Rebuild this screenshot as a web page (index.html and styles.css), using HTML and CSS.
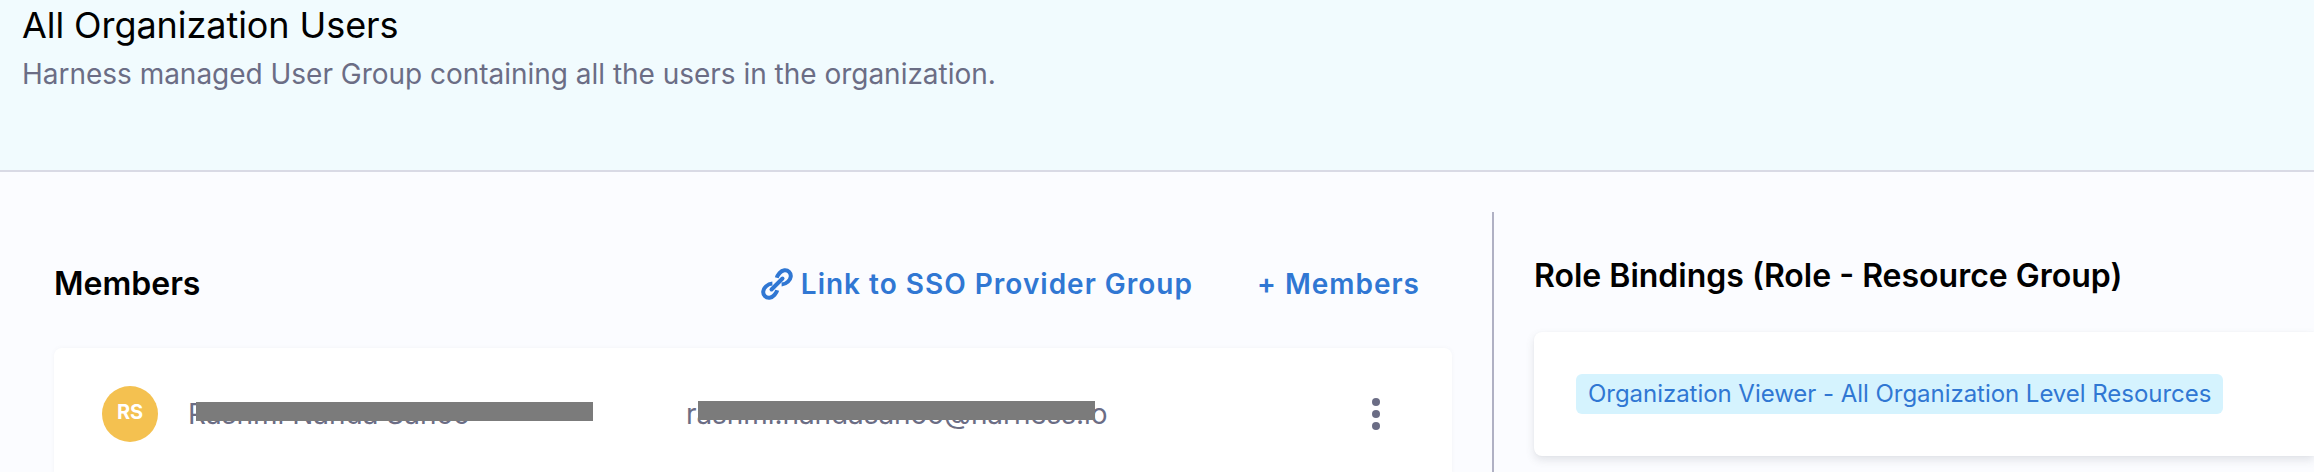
FILE: index.html
```html
<!DOCTYPE html>
<html lang="en">
<head>
<meta charset="utf-8">
<title>All Organization Users</title>
<link rel="stylesheet" href="styles.css">
</head>
<body>
<header class="header">
  <h1 class="title">All Organization Users</h1>
  <p class="subtitle">Harness managed User Group containing all the users in the organization.</p>
</header>
<main class="content">
  <section class="members">
    <div class="toolbar">
      <h2 class="heading">Members</h2>
      <a class="link sso">
        <svg class="link-icon" viewBox="0 0 32 32" fill="none" stroke="currentColor">
          <path stroke-width="4" d="M15.8 9.8 C16.2 8.2 17.2 6.6 18.5 5.1 C21.4 1.8 25.5 1.2 28.1 3.9 C30.8 6.6 30.1 10.6 27 13.6 C25.2 15.3 23.5 16.3 20.6 16.4"/>
          <path stroke-width="4" d="M16.2 22.2 C15.8 23.8 14.8 25.4 13.5 26.9 C10.6 30.2 6.5 30.8 3.9 28.1 C1.2 25.4 1.9 21.4 5 18.4 C6.8 16.7 8.5 15.7 11.4 15.6"/>
          <path stroke-width="4" stroke-linecap="round" d="M10.5 21.5 L21.5 10.5"/>
        </svg>
        <span class="sso-text">Link to SSO Provider Group</span>
      </a>
      <a class="link add">+ Members</a>
    </div>
    <div class="member-card">
      <span class="avatar">RS</span>
      <span class="cell name">Rashmi Nanda Sahoo<span class="mask"></span></span>
      <span class="cell email">rashmi.nandasahoo@harness.io<span class="mask"></span></span>
      <svg class="menu" viewBox="0 0 8 32"><circle cx="4" cy="4" r="4"/><circle cx="4" cy="16" r="4"/><circle cx="4" cy="28" r="4"/></svg>
    </div>
  </section>
  <section class="roles">
    <h2 class="heading role-heading">Role Bindings (Role - Resource Group)</h2>
    <div class="role-card"><span class="tag">Organization Viewer - All Organization Level Resources</span></div>
  </section>
</main>
</body>
</html>
```

FILE: styles.css
```css
* { box-sizing: border-box; }
body {
  margin: 0;
  height: 472px;
  overflow: hidden;
  font-family: Inter, "Liberation Sans", sans-serif;
  background: #fbfcff;
  color: #000;
  white-space: nowrap;
}
h1, h2, p { margin: 0; }
.header {
  height: 172px;
  padding: 3px 22px 0;
  background: #f1fbfe;
  border-bottom: 2px solid #d9dae5;
}
.title { font-size: 36px; line-height: 44px; font-weight: 400; letter-spacing: -0.07px; }
.subtitle { margin-top: 10px; font-size: 28px; line-height: 34px; letter-spacing: -0.02px; color: #6b6d85; }
.content { display: flex; height: 300px; padding-top: 40px; }
.members { width: 1494px; padding: 44px 40px 0 54px; border-right: 2px solid #b0b1c4; }
.toolbar { display: flex; align-items: center; height: 56px; }
.heading { font-size: 32px; line-height: 40px; font-weight: 600; }
.link {
  display: flex;
  align-items: center;
  font-size: 28px;
  line-height: 34px;
  font-weight: 600;
  letter-spacing: 1px;
  color: #3077d3;
}
.sso { margin-left: auto; }
.link-icon { width: 32px; height: 32px; margin-right: 8px; }
.add { margin: 0 32px 0 64px; }
.member-card {
  display: flex;
  align-items: center;
  height: 132px;
  width: 1398px;
  margin-top: 36px;
  padding: 0 72px 0 48px;
  background: #fff;
  border-radius: 8px;
  box-shadow: 0 0 4px rgba(96, 97, 112, 0.06);
}
.avatar {
  width: 56px;
  height: 56px;
  border-radius: 50%;
  background: #f4c150;
  color: #fff;
  font-size: 20px;
  line-height: 52px;
  font-weight: 700;
  text-align: center;
}
.cell { position: relative; font-size: 28px; line-height: 34px; color: #6b6d85; }
.name { width: 498px; margin-left: 30px; }
.email { letter-spacing: -0.08px; }
.mask { position: absolute; width: 397px; height: 19px; background: #7b7b7b; }
.name .mask { left: 8px; top: 5px; }
.email .mask { left: 12px; top: 4px; }
.menu { width: 8px; height: 32px; margin-left: auto; fill: #6b6d85; }
.roles { flex: 1; padding: 44px 0 0 40px; }
.role-card {
  display: flex;
  align-items: center;
  height: 124px;
  margin-top: 36px;
  padding-left: 42px;
  background: #fff;
  border-radius: 8px 0 0 8px;
  box-shadow: 0 4px 8px rgba(96, 97, 112, 0.16), 0 0 2px rgba(40, 41, 61, 0.04);
}
.tag {
  height: 40px;
  padding: 0 12px;
  border-radius: 6px;
  background: #d5f3fe;
  color: #3077d3;
  font-size: 24px;
  line-height: 39px;
  letter-spacing: -0.04px;
}
```
